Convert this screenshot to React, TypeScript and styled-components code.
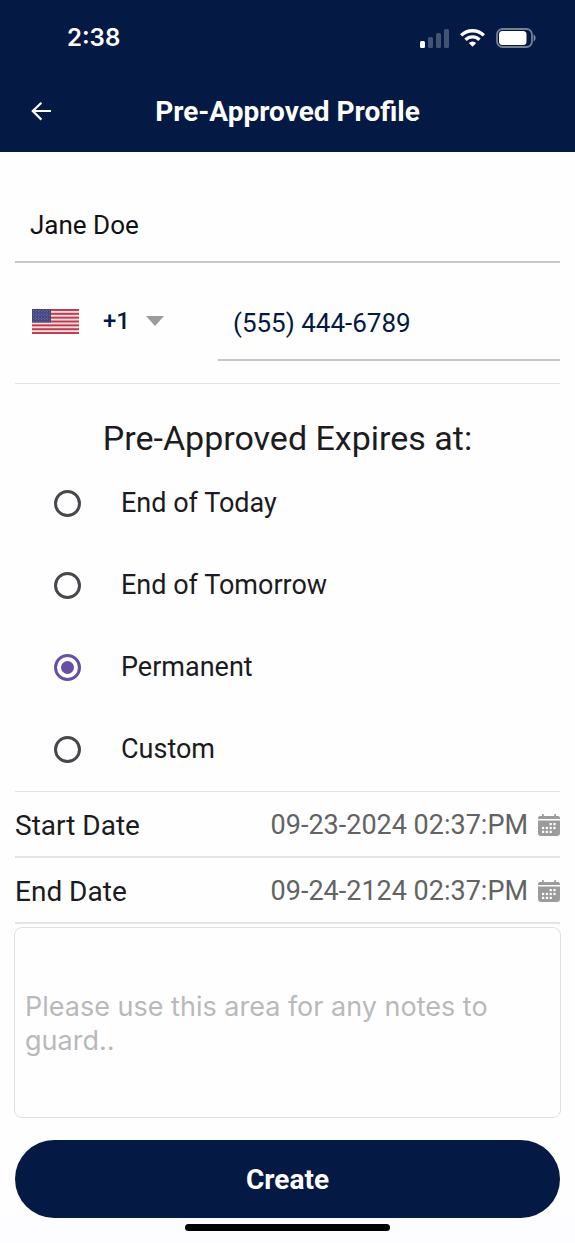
import React, { useState } from 'react';
import styled, { createGlobalStyle } from 'styled-components';

const navy = '#041943';

const GlobalStyle = createGlobalStyle`
  *, *::before, *::after { box-sizing: border-box; }
  body {
    margin: 0;
    background: #fefefe;
    color: #1c1b1f;
    font-family: Roboto, "Liberation Sans", sans-serif;
  }
  button, input, select, textarea { font: inherit; color: inherit; }
`;

const Screen = styled.div`
  display: flex;
  flex-direction: column;
  min-height: 100vh;
`;

const TopArea = styled.header`
  background: ${navy};
  color: #fff;
`;

const StatusBar = styled.div`
  display: flex;
  align-items: center;
  justify-content: space-between;
  height: 72px;
  padding: 4px 39px 0 67px;
`;

const Clock = styled.span`
  font-family: Inter, "Liberation Sans", sans-serif;
  font-size: 24px;
  font-weight: 600;
  line-height: 32px;
`;

const StatusIcons = styled.div`
  display: flex;
  align-items: center;
  gap: 11px;
`;

const TitleBar = styled.div`
  display: grid;
  grid-template-columns: 56px 1fr 56px;
  align-items: center;
  height: 80px;
  padding: 0 13px;
`;

const BackButton = styled.button`
  display: flex;
  align-items: center;
  justify-content: center;
  height: 56px;
  padding: 0;
  border: 0;
  background: none;
`;

const Title = styled.h1`
  margin: 0;
  font-size: 28px;
  font-weight: 700;
  line-height: 36px;
  text-align: center;
`;

const Form = styled.form`
  display: flex;
  flex-direction: column;
  flex: 1;
  padding: 36px 15px 0;
`;

const TextField = styled.input<{ $tone?: string }>`
  width: 100%;
  min-width: 0;
  height: 75px;
  padding: 0 15px;
  border: 0;
  border-bottom: 2px solid #c6c6c6;
  border-radius: 0;
  outline: 0;
  background: transparent;
  color: ${({ $tone }) => $tone ?? '#111'};
  font-size: 26px;
`;

const PhoneRow = styled.div`
  display: grid;
  grid-template-columns: 203px 1fr;
  padding: 23px 0 22px;
  border-bottom: 1px solid #e2e2e2;
`;

const CountryPicker = styled.div`
  display: flex;
  align-items: center;
  height: 70px;
  padding-left: 17px;
  gap: 24px;
`;

const CodeBox = styled.div`
  display: flex;
  align-items: center;
`;

const CodeSelect = styled.select`
  appearance: none;
  width: 43px;
  padding: 0;
  border: 0;
  outline: 0;
  background: transparent;
  color: ${navy};
  font-size: 24px;
  font-weight: 500;
`;

const Options = styled.fieldset`
  min-width: 0;
  margin: 0;
  padding: 0 0 1px;
  border: 0;
`;

const OptionsTitle = styled.legend`
  width: 100%;
  padding: 36px 0 6px;
  font-size: 34px;
  line-height: 36px;
  text-align: center;
`;

const Option = styled.label`
  display: flex;
  align-items: center;
  gap: 40px;
  height: 82px;
  padding-left: 39px;
  font-size: 27px;
  cursor: pointer;
`;

const Radio = styled.input`
  appearance: none;
  display: grid;
  place-items: center;
  flex: none;
  width: 27px;
  height: 27px;
  margin: 0;
  border: 3px solid #49474d;
  border-radius: 50%;

  &:checked { border-color: #6750a4; }
  &:checked::before {
    content: '';
    width: 13px;
    height: 13px;
    border-radius: 50%;
    background: #6750a4;
  }
`;

const Dates = styled.div`
  border-top: 1px solid #e2e2e2;
`;

const DateRow = styled.div`
  display: flex;
  align-items: center;
  justify-content: space-between;
  height: 66px;
  padding-top: 2px;
  border-bottom: 2px solid #e4e4e4;
  font-size: 28px;
`;

const DateButton = styled.button`
  display: flex;
  align-items: center;
  gap: 10px;
  padding: 0;
  border: 0;
  background: none;
  color: #636363;
  font-size: 27px;
`;

const Notes = styled.textarea`
  display: block;
  height: 191px;
  margin: 3px -1px 22px;
  padding: 62px 10px 0;
  border: 1px solid #e0e0e0;
  border-radius: 8px;
  outline: 0;
  resize: none;
  background: transparent;
  font-family: Inter, "Liberation Sans", sans-serif;
  font-size: 27px;
  line-height: 34px;

  &::placeholder { color: #b9b9bb; opacity: 1; }
`;

const CreateButton = styled.button`
  height: 78px;
  border: 0;
  border-radius: 39px;
  background: ${navy};
  color: #fff;
  font-size: 28px;
  font-weight: 700;
`;

const HomeArea = styled.footer`
  display: flex;
  justify-content: center;
  height: 25px;
  padding-top: 6px;
  background: #fdfcfe;
`;

const HomeIndicator = styled.div`
  width: 205px;
  height: 7px;
  border-radius: 4px;
  background: #000;
`;

const SignalIcon = () => (
  <svg width="29" height="19" viewBox="0 0 29 19" fill="#fff" aria-hidden="true">
    <rect x="0" y="12" width="5" height="7" rx="1.5" />
    <g opacity="0.25">
      <rect x="8" y="8" width="5" height="11" rx="1.5" />
      <rect x="16" y="4" width="5" height="15" rx="1.5" />
      <rect x="24" y="0" width="5" height="19" rx="1.5" />
    </g>
  </svg>
);

const WifiIcon = () => (
  <svg width="25" height="18" viewBox="0 0 25 18" aria-hidden="true">
    <g fill="none" stroke="#fff" strokeWidth="3.4">
      <path d="M1.2 6.4a16 16 0 0 1 22.6 0" />
      <path d="M5.5 10.8a9.9 9.9 0 0 1 14 0" />
    </g>
    <path d="M8.8 14a5.2 5.2 0 0 1 7.4 0L12.5 17.8z" fill="#fff" />
  </svg>
);

const BatteryIcon = () => (
  <svg width="40" height="20" viewBox="0 0 40 20" aria-hidden="true">
    <rect x="1" y="1" width="35" height="18" rx="5.5" fill="none" stroke="#fff" strokeOpacity="0.45" strokeWidth="1.8" />
    <rect x="3" y="3" width="27.5" height="14" rx="3.5" fill="#fff" />
    <path d="M37.6 6.6c2.6 1.2 2.6 5.6 0 6.8z" fill="#fff" fillOpacity="0.5" />
  </svg>
);

const BackIcon = () => (
  <svg width="20" height="20" viewBox="0 0 20 20" fill="none" stroke="#fff" strokeWidth="2.2" aria-hidden="true">
    <path d="M20 9H2M10.4 0.8L1.8 9l8.6 8.6" />
  </svg>
);

const FlagIcon = () => {
  const stars = [];
  for (let row = 0; row < 9; row += 1) {
    const count = row % 2 === 0 ? 6 : 5;
    for (let col = 0; col < count; col += 1) {
      stars.push(
        <circle key={`${row}-${col}`} cx={1.7 + col * 3.1 + (row % 2) * 1.55} cy={1.4 + row * 1.33} r="0.4" fill="#b4b4d0" />,
      );
    }
  }
  return (
    <svg width="47" height="25" viewBox="0 0 47 25" role="img" aria-label="United States">
      <rect width="47" height="25" fill="#f3dde1" />
      {[0, 1, 2, 3, 4, 5, 6].map((i) => (
        <rect key={i} y={(i * 50) / 13} width="47" height={25 / 13} fill="#bf3a4b" />
      ))}
      <rect width="19" height={(25 * 7) / 13} fill="#46467f" />
      {stars}
    </svg>
  );
};

const CaretIcon = () => (
  <svg width="18" height="10" viewBox="0 0 18 10" aria-hidden="true">
    <path d="M0 0h18l-9 10z" fill="#9c9c9c" />
  </svg>
);

const CalendarIcon = () => (
  <svg width="22" height="22" viewBox="0 0 22 22" aria-hidden="true">
    <path
      d="M0 5V4a2 2 0 0 1 2-2h2V0.8a.9.9 0 0 1 1.8 0V2h10.4V.8a.9.9 0 0 1 1.8 0V2h2a2 2 0 0 1 2 2v1zM0 6.4h22V19a3 3 0 0 1-3 3H3a3 3 0 0 1-3-3z"
      fill="#9b9b9b"
    />
    <g fill="#fff">
      {[[11.6, 9], [15.4, 9], [4, 12.9], [7.8, 12.9], [11.6, 12.9], [15.4, 12.9], [4, 16.8], [7.8, 16.8], [11.6, 16.8]].map(([x, y]) => (
        <rect key={`${x}-${y}`} x={x} y={y} width="2.2" height="2.2" />
      ))}
    </g>
  </svg>
);

const choices = ['End of Today', 'End of Tomorrow', 'Permanent', 'Custom'];

const dates = [
  { id: 'start-date', label: 'Start Date', value: '09-23-2024 02:37:PM' },
  { id: 'end-date', label: 'End Date', value: '09-24-2124 02:37:PM' },
];

export default function App() {
  const [expiry, setExpiry] = useState('Permanent');

  return (
    <Screen>
      <GlobalStyle />
      <TopArea>
        <StatusBar>
          <Clock>2:38</Clock>
          <StatusIcons>
            <SignalIcon />
            <WifiIcon />
            <BatteryIcon />
          </StatusIcons>
        </StatusBar>
        <TitleBar>
          <BackButton type="button" aria-label="Back">
            <BackIcon />
          </BackButton>
          <Title>Pre-Approved Profile</Title>
        </TitleBar>
      </TopArea>

      <Form onSubmit={(event) => event.preventDefault()}>
        <TextField type="text" aria-label="Name" defaultValue="Jane Doe" />

        <PhoneRow>
          <CountryPicker>
            <FlagIcon />
            <CodeBox>
              <CodeSelect aria-label="Country code" defaultValue="+1">
                <option>+1</option>
              </CodeSelect>
              <CaretIcon />
            </CodeBox>
          </CountryPicker>
          <TextField type="tel" aria-label="Phone number" defaultValue="(555) 444-6789" $tone={navy} />
        </PhoneRow>

        <Options>
          <OptionsTitle>Pre-Approved Expires at:</OptionsTitle>
          {choices.map((choice) => (
            <Option key={choice}>
              <Radio
                type="radio"
                name="expiry"
                value={choice}
                checked={expiry === choice}
                onChange={() => setExpiry(choice)}
              />
              {choice}
            </Option>
          ))}
        </Options>

        <Dates>
          {dates.map(({ id, label, value }) => (
            <DateRow key={id}>
              <label htmlFor={id}>{label}</label>
              <DateButton type="button" id={id}>
                {value}
                <CalendarIcon />
              </DateButton>
            </DateRow>
          ))}
        </Dates>

        <Notes aria-label="Notes to guard" placeholder="Please use this area for any notes to guard.." />
        <CreateButton type="submit">Create</CreateButton>
      </Form>

      <HomeArea>
        <HomeIndicator />
      </HomeArea>
    </Screen>
  );
}
